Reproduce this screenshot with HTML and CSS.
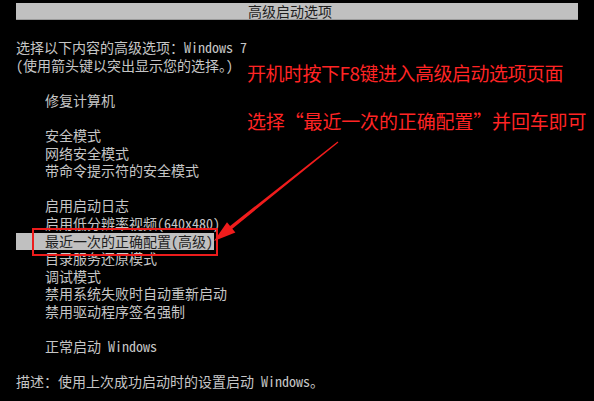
FILE: index.html
```html
<!DOCTYPE html>
<html lang="zh-CN">
<head>
<meta charset="utf-8">
<title>高级启动选项</title>
<link rel="stylesheet" href="styles.css">
</head>
<body>
<div class="title">高级启动选项</div>
<div class="screen">
  <div class="intro">
    <div class="line">选择以下内容的高级选项：Windows 7</div>
    <div class="line">(使用箭头键以突出显示您的选择。)</div>
  </div>
  <div class="group">
    <div class="item">修复计算机</div>
  </div>
  <div class="group">
    <div class="item">安全模式</div>
    <div class="item">网络安全模式</div>
    <div class="item">带命令提示符的安全模式</div>
  </div>
  <div class="group">
    <div class="item">启用启动日志</div>
    <div class="item">启用低分辨率视频(640x480)</div>
    <div class="item selected">最近一次的正确配置(高级)<span class="mark"></span></div>
    <div class="item">目录服务还原模式</div>
    <div class="item">调试模式</div>
    <div class="item">禁用系统失败时自动重新启动</div>
    <div class="item">禁用驱动程序签名强制</div>
  </div>
  <div class="group">
    <div class="item">正常启动 Windows</div>
  </div>
  <div class="desc">描述：使用上次成功启动时的设置启动 Windows。</div>
</div>
<div class="note note-1">开机时按下F8键进入高级启动选项页面</div>
<div class="note note-2">选择“最近一次的正确配置”并回车即可</div>
<svg class="arrow" width="594" height="401" viewBox="0 0 594 401">
  <polygon points="337.6,141.6 230.1,225.9 227,222.2 214,241 235.4,232.4 232.3,228.7 338.4,142.6" fill="#f01c1c"/>
</svg>
</body>
</html>
```

FILE: styles.css
```css
html, body {
  margin: 0;
  padding: 0;
  background: #000;
}
body {
  width: 594px;
  height: 401px;
  overflow: hidden;
  position: relative;
  font-family: "Noto Sans Mono CJK SC", "Noto Sans CJK SC", "DejaVu Sans Mono", monospace;
  font-size: 14px;
  color: #c6c6c6;
}
.title {
  margin: 3px 16px 0;
  padding-right: 14px;
  height: 17px;
  line-height: 17px;
  background: #c0c0c0;
  color: #1e1e1e;
  text-align: center;
  box-shadow: inset 0 -1px 0 #9a9a9a;
}
.screen {
  padding: 19px 0 0 16px;
  line-height: 17.6px;
}
.line {
  white-space: pre;
}
.intro, .group {
  display: flex;
  flex-direction: column;
  align-items: flex-start;
  margin-bottom: 17.6px;
}
.item {
  padding-left: 29px;
  padding-right: 1px;
  white-space: pre;
}
.item.selected {
  position: relative;
  background: #c0c0c0;
  color: #1e1e1e;
}
.mark {
  position: absolute;
  left: 16px;
  top: -5px;
  width: 186px;
  height: 28px;
  box-sizing: border-box;
  border: 2px solid #ec1c1c;
}
.desc {
  white-space: pre;
}
.note {
  position: absolute;
  left: 247px;
  font-family: "Noto Sans CJK SC", "Noto Sans", sans-serif;
  font-size: 19px;
  line-height: 20px;
  color: #ff2424;
  white-space: nowrap;
}
.note-1 { top: 63px; letter-spacing: -0.5px; }
.note-2 { top: 111px; letter-spacing: -0.15px; }
.arrow {
  position: absolute;
  left: 0;
  top: 0;
  pointer-events: none;
}
```
